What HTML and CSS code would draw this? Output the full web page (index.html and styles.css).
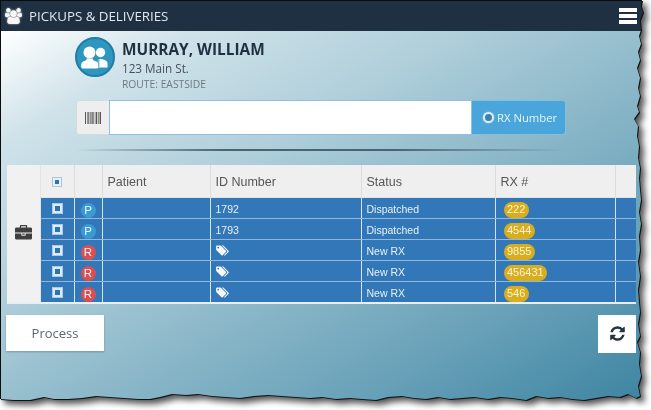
FILE: index.html
```html
<!DOCTYPE html>
<html lang="en">
<head>
<meta charset="utf-8">
<title>Pickups &amp; Deliveries</title>
<link rel="stylesheet" href="styles.css">
</head>
<body>
<div class="shadow">
<div class="app">
  <header class="nav">
    <svg class="nav-icon" viewBox="0 0 1920 1792"><path d="M593 896q-162 5-265 128h-134q-82 0-138-40.500t-56-118.500q0-353 124-353 6 0 43.500 21t97.500 42.500 119 21.500q67 0 133-23-5 37-5 66 0 139 81 256zm1071 637q0 120-73 189.500t-194 69.500h-874q-121 0-194-69.500t-73-189.500q0-53 3.500-103.500t14-109 26.500-108.500 43-97.500 62-81 85.500-53.500 111.500-20q10 0 43 21.500t73 48 107 48 135 21.500 135-21.500 107-48 73-48 43-21.500q61 0 111.500 20t85.500 53.500 62 81 43 97.500 26.500 108.500 14 109 3.500 103.500zm-1024-1277q0 106-75 181t-181 75-181-75-75-181 75-181 181-75 181 75 75 181zm704 384q0 159-112.500 271.500t-271.500 112.500-271.500-112.500-112.500-271.500 112.500-271.500 271.500-112.500 271.500 112.500 112.500 271.500zm576 225q0 78-56 118.500t-138 40.500h-134q-103-123-265-128 81-117 81-256 0-29-5-66 66 23 133 23 59 0 119-21.500t97.500-42.500 43.500-21q124 0 124 353zm-128-609q0 106-75 181t-181 75-181-75-75-181 75-181 181-75 181 75 75 181z"/></svg>
    <span class="nav-title">PICKUPS &amp; DELIVERIES</span>
    <div class="burger"><i></i><i></i><i></i></div>
  </header>
  <main class="main">
    <section class="patient">
      <svg class="avatar" viewBox="0 0 40 40">
        <circle cx="20" cy="20" r="19" fill="#2f97bd" stroke="#1d7ea8" stroke-width="2"/>
        <circle cx="25.500" cy="15.500" r="4.700" fill="#fff"/>
        <path d="M23 22h3.500c3 .8 6 1.800 6 4.500v4h-10z" fill="#fff"/>
        <circle cx="14.500" cy="15.500" r="6" fill="#fff"/>
        <path d="M11.500 21.500c.4 1.600-.6 2-2 2.400-1.900.6-3.300 1.500-3.300 3.600v2.500c0 1 .8 1.500 1.800 1.500h13.500c1 0 1.800-.5 1.800-1.500v-2.500c0-2.100-1.400-3-3.300-3.600-1.400-.4-2.400-.8-2-2.400z" fill="#fff"/>
        <path d="M23.800 21.500v8.500" stroke="#2f97bd" stroke-width="1" fill="none"/>
      </svg>
      <div class="patient-info">
        <h1 class="patient-name">MURRAY, WILLIAM</h1>
        <div class="patient-addr">123 Main St.</div>
        <div class="patient-route">ROUTE: EASTSIDE</div>
      </div>
    </section>

    <div class="input-group">
      <span class="addon">
        <svg class="barcode" viewBox="0 0 16 12"><path d="M0 0h1v12H0zM2 0h.6v12H2zM3.300 0h1v12h-1zM5 0h.6v12H5zM6.500 0h1.200v12H6.500zM8.400 0h.6v12h-.6zM9.800 0h.6v12h-.6zM11 0h1.200v12H11zM13 0h.6v12H13zM14.600 0H16v12h-1.400z"/></svg>
      </span>
      <input class="rx-input" type="text" aria-label="RX Number">
      <button class="rx-btn" type="button"><span class="radio"></span>RX Number</button>
    </div>
    <div class="divider"></div>

    <table class="grid">
      <colgroup>
        <col class="c-side"><col class="c-check"><col class="c-type"><col class="c-patient"><col class="c-id"><col class="c-status"><col class="c-rx"><col>
      </colgroup>
      <tbody>
        <tr>
          <td class="side" rowspan="6">
            <svg class="case" viewBox="0 0 1792 1792"><path d="M640 256h512v-128h-512v128zm1152 640v480q0 66-47 113t-113 47h-1472q-66 0-113-47t-47-113v-480h672v160q0 26 19 45t45 19h320q26 0 45-19t19-45v-160h672zm-768 0v128h-256v-128h256zm768-480v384h-1792v-384q0-66 47-113t113-47h352v-160q0-40 28-68t68-28h576q40 0 68 28t28 68v160h352q66 0 113 47t47 113z"/></svg>
          </td>
          <th class="center"><span class="check check-head"></span></th>
          <th></th>
          <th>Patient</th>
          <th>ID Number</th>
          <th>Status</th>
          <th>RX #</th>
          <th></th>
        </tr>
        <tr class="row">
          <td><div class="cell cell-check"><span class="check"></span></div></td>
          <td><div class="cell cell-dot"><span class="dot dot-p">P</span></div></td>
          <td></td>
          <td><div class="cell cell-text">1792</div></td>
          <td><div class="cell cell-text">Dispatched</div></td>
          <td><div class="cell cell-pill"><span class="pill">222</span></div></td>
          <td></td>
        </tr>
        <tr class="row">
          <td><div class="cell cell-check"><span class="check"></span></div></td>
          <td><div class="cell cell-dot"><span class="dot dot-p">P</span></div></td>
          <td></td>
          <td><div class="cell cell-text">1793</div></td>
          <td><div class="cell cell-text">Dispatched</div></td>
          <td><div class="cell cell-pill"><span class="pill">4544</span></div></td>
          <td></td>
        </tr>
        <tr class="row">
          <td><div class="cell cell-check"><span class="check"></span></div></td>
          <td><div class="cell cell-dot"><span class="dot dot-r">R</span></div></td>
          <td></td>
          <td><div class="cell cell-text"><svg class="tag" viewBox="0 0 1920 1792"><path d="M448 384q0-53-37.500-90.500t-90.500-37.500-90.500 37.500-37.500 90.500 37.500 90.500 90.500 37.500 90.500-37.500 37.500-90.500zm1067 576q0 53-37 90l-491 492q-39 37-91 37-53 0-90-37l-715-716q-38-37-64.500-101t-26.500-117v-416q0-52 38-90t90-38h416q53 0 117 26.500t102 64.500l715 714q37 39 37 91zm384 0q0 53-37 90l-491 492q-39 37-91 37-36 0-59-14t-53-45l470-470q37-37 37-90 0-52-37-91l-715-714q-38-38-102-64.500t-117-26.500h224q53 0 117 26.500t102 64.500l715 714q37 39 37 91z"/></svg></div></td>
          <td><div class="cell cell-text">New RX</div></td>
          <td><div class="cell cell-pill"><span class="pill">9855</span></div></td>
          <td></td>
        </tr>
        <tr class="row">
          <td><div class="cell cell-check"><span class="check"></span></div></td>
          <td><div class="cell cell-dot"><span class="dot dot-r">R</span></div></td>
          <td></td>
          <td><div class="cell cell-text"><svg class="tag" viewBox="0 0 1920 1792"><path d="M448 384q0-53-37.500-90.500t-90.500-37.500-90.500 37.500-37.500 90.500 37.500 90.500 90.500 37.500 90.500-37.500 37.500-90.500zm1067 576q0 53-37 90l-491 492q-39 37-91 37-53 0-90-37l-715-716q-38-37-64.500-101t-26.500-117v-416q0-52 38-90t90-38h416q53 0 117 26.500t102 64.500l715 714q37 39 37 91zm384 0q0 53-37 90l-491 492q-39 37-91 37-36 0-59-14t-53-45l470-470q37-37 37-90 0-52-37-91l-715-714q-38-38-102-64.500t-117-26.500h224q53 0 117 26.500t102 64.500l715 714q37 39 37 91z"/></svg></div></td>
          <td><div class="cell cell-text">New RX</div></td>
          <td><div class="cell cell-pill"><span class="pill">456431</span></div></td>
          <td></td>
        </tr>
        <tr class="row">
          <td><div class="cell cell-check"><span class="check"></span></div></td>
          <td><div class="cell cell-dot"><span class="dot dot-r">R</span></div></td>
          <td></td>
          <td><div class="cell cell-text"><svg class="tag" viewBox="0 0 1920 1792"><path d="M448 384q0-53-37.500-90.500t-90.500-37.500-90.500 37.500-37.500 90.500 37.500 90.500 90.500 37.500 90.500-37.500 37.500-90.500zm1067 576q0 53-37 90l-491 492q-39 37-91 37-53 0-90-37l-715-716q-38-37-64.500-101t-26.500-117v-416q0-52 38-90t90-38h416q53 0 117 26.500t102 64.500l715 714q37 39 37 91zm384 0q0 53-37 90l-491 492q-39 37-91 37-36 0-59-14t-53-45l470-470q37-37 37-90 0-52-37-91l-715-714q-38-38-102-64.500t-117-26.500h224q53 0 117 26.500t102 64.500l715 714q37 39 37 91z"/></svg></div></td>
          <td><div class="cell cell-text">New RX</div></td>
          <td><div class="cell cell-pill"><span class="pill">546</span></div></td>
          <td></td>
        </tr>
      </tbody>
    </table>

    <div class="actions">
      <button class="process" type="button">Process</button>
      <button class="refresh" type="button" aria-label="Refresh">
        <svg viewBox="0 0 1792 1792"><path d="M1639 1056q0 5-1 7-64 268-268 434.500t-478 166.500q-146 0-282.500-55t-243.500-157l-129 129q-19 19-45 19t-45-19-19-45v-448q0-26 19-45t45-19h448q26 0 45 19t19 45-19 45l-137 137q71 66 161 102t187 36q134 0 250-65t186-179q11-17 53-117 8-23 30-23h192q13 0 22.500 9.500t9.500 22.500zm25-800v448q0 26-19 45t-45 19h-448q-26 0-45-19t-19-45 19-45l138-138q-148-137-349-137-134 0-250 65t-186 179q-11 17-53 117-8 23-30 23h-199q-13 0-22.500-9.500t-9.500-22.500v-7q65-268 270-434.500t480-166.500q146 0 284 55.500t245 156.500l130-129q19-19 45-19t45 19 19 45z"/></svg>
      </button>
    </div>
  </main>
</div>
</div>
</body>
</html>
```
FILE: styles.css
```css
* { box-sizing: border-box; }
html, body { margin: 0; padding: 0; background: #fff; overflow: hidden; }
body { width: 651px; height: 410px; }

.shadow {
  width: 651px;
  height: 410px;
  filter: drop-shadow(1px 1px 0 #111) drop-shadow(4px 4px 3px rgba(40,40,40,.8));
}
.app {
  width: 651px;
  height: 410px;
  display: flex;
  flex-direction: column;
  border-top: 1px solid #0c0c0c;
  border-left: 1px solid #0c0c0c;
  clip-path: polygon(0 0, 642px 0, 641px 6px, 643px 12px, 640px 20px, 641px 30px, 639px 36px, 641px 44px, 638px 52px, 640px 60px, 637px 68px, 640px 78px, 638px 88px, 640px 96px, 637px 106px, 639px 112px, 634px 119px, 638px 126px, 637px 136px, 639px 146px, 638px 158px, 640px 168px, 639px 178px, 640px 190px, 641px 200px, 639px 212px, 641px 224px, 639px 236px, 640px 250px, 638px 262px, 640px 276px, 638px 290px, 639px 302px, 640px 312px, 638px 324px, 640px 336px, 637px 342px, 640px 352px, 639px 364px, 641px 376px, 638px 386px, 640px 396px, 636px 398px, 628px 394px, 620px 397px, 608px 396px, 596px 398px, 584px 400px, 572px 399px, 560px 397px, 548px 398px, 536px 396px, 526px 400px, 512px 398px, 500px 397px, 488px 399px, 474px 397px, 462px 398px, 450px 399px, 438px 397px, 426px 399px, 414px 398px, 402px 396px, 388px 397px, 376px 400px, 362px 399px, 350px 398px, 336px 399px, 322px 397px, 310px 398px, 296px 397px, 282px 396px, 268px 395px, 254px 396px, 240px 398px, 226px 397px, 212px 396px, 198px 394px, 186px 395px, 172px 394px, 160px 397px, 150px 399px, 138px 399px, 124px 398px, 110px 397px, 96px 396px, 82px 398px, 68px 399px, 54px 399px, 44px 397px, 30px 400px, 14px 400px, 0 399px);
}

/* top bar */
.nav {
  flex: none;
  height: 30px;
  background: #1f3042;
  display: flex;
  align-items: center;
  padding: 0 14px 0 4px;
  color: #dfe7ec;
  font: 13.300px "Open Sans", sans-serif;
}
.nav-icon { width: 17px; height: 16px; fill: #f4f6f7; margin-right: 7px; filter: drop-shadow(0 0 1px rgba(255,255,255,.6)); }
.nav-title { flex: 1; }
.burger { width: 18px; display: flex; flex-direction: column; gap: 2px; }
.burger i { display: block; height: 4px; background: #fff; }

/* content */
.main {
  flex: 1;
  padding: 6px 15px 0 5px;
  background: linear-gradient(to bottom right, #ffffff 0%, #cfe2e9 15%, #b0cfdb 35%, #8cb8c9 55%, #6aa2b9 75%, #3a82a0 100%);
}
.patient {
  display: flex;
  gap: 7px;
  margin-left: 69px;
  height: 63px;
}
.avatar { width: 40px; height: 40px; flex: none; }
.patient-info { color: #55626d; font-family: "Open Sans", sans-serif; }
.patient-name {
  margin: 2px 0 0;
  font-size: 15.400px;
  line-height: 22px;
  font-weight: 700;
  color: #1f3042;
}
.patient-addr { font-size: 11.700px; line-height: 15px; color: #44525e; }
.patient-route { font-size: 10.300px; line-height: 17px; color: #6d7a84; }

.input-group {
  display: flex;
  height: 35px;
  margin-left: 70px;
  width: 490px;
}
.addon {
  width: 33px;
  display: flex;
  align-items: center;
  justify-content: center;
  background: #eeeeee;
  border: 1px solid #cfdde3;
  border-right: 0;
  border-radius: 4px 0 0 4px;
}
.barcode { width: 16px; height: 12px; fill: #555; }
.rx-input {
  flex: 1;
  min-width: 0;
  background: #fff;
  border: 1px solid #8fc0e4;
  outline: 0;
  padding: 0;
}
.rx-btn {
  width: 94px;
  display: flex;
  align-items: center;
  padding: 0 0 0 11px;
  background: #4aa6da;
  border: 1px solid #7fc0e2;
  border-left: 0;
  border-radius: 0 4px 4px 0;
  color: #e6f3fa;
  font: 11.300px "Open Sans", sans-serif;
}
.radio {
  width: 11px;
  height: 11px;
  margin-right: 3px;
  border-radius: 50%;
  background: #3f7fac;
  border: 2.500px solid #d9edf7;
  box-shadow: 0 0 0 .5px #8ac4e4;
}
.divider {
  height: 2px;
  margin: 14px 0 14px 70px;
  width: 490px;
  background: linear-gradient(90deg, rgba(50,70,85,0), #4b6473 30%, #4b6473 65%, rgba(50,70,85,0));
}

/* table */
.grid {
  width: 629px;
  margin-left: 1px;
  border-collapse: collapse;
  table-layout: fixed;
  background: #f0f0f0;
  font-family: "Liberation Sans", Arial, sans-serif;
  border-bottom: 2px solid #e8eef1;
}
.c-side { width: 33px; }
.c-check { width: 34px; }
.c-type { width: 28px; }
.c-patient { width: 108px; }
.c-id { width: 151px; }
.c-status { width: 134px; }
.c-rx { width: 120px; }
.grid th {
  height: 32px;
  padding: 2px 0 0 5px;
  text-align: left;
  font-size: 12.500px;
  font-weight: 400;
  color: #555;
  background: #efefef;
  border-left: 1px solid #dcdcdc;
  border-bottom: 1px solid #e4e4e4;
}
.grid th.center { padding: 0; text-align: center; }
.grid .row td {
  height: 21px;
  padding: 0;
  background: #3278b8;
  color: #e8f0f7;
  font-size: 10.500px;
  line-height: 12px;
  border-left: 1px solid #d6e4f0;
  border-bottom: 1px solid #8fb8da;
}
.cell {
  height: 20px;
  display: flex;
  align-items: center;
}
.cell-text { padding: 3px 0 0 5px; }
.cell-check { justify-content: center; padding-top: 1px; }
.cell-dot { justify-content: center; padding-top: 5px; }
.cell-pill { padding: 5px 0 0 8px; }
.grid .side {
  background: #f1f1f1;
  text-align: center;
  padding: 0;
  border-right: 1px solid #e4e4e4;
}
.case { width: 17px; height: 17px; fill: #3f3f3f; vertical-align: middle; }
.check {
  display: block;
  width: 11px;
  height: 11px;
  background: #2f72b0;
  border: 1px solid #a9cbe8;
  box-shadow: inset 0 0 0 2px #dcebf7;
}
.check-head {
  display: inline-block;
  width: 10px;
  height: 10px;
  vertical-align: -2px;
  background: #2f72b0;
  border: 1px solid #a3c7e6;
  box-shadow: inset 0 0 0 2px #e8f1f9;
}
.dot {
  flex: none;
  width: 15px;
  height: 15px;
  border-radius: 50%;
  font-size: 11.500px;
  line-height: 15px;
  text-align: center;
  color: #eef5fa;
}
.dot-p { background: #3a9ad4; }
.dot-r { background: #dc4e50; }
.pill {
  flex: none;
  padding: 0 3.500px;
  height: 16px;
  border-radius: 8px;
  background: #d8ae1e;
  color: #f8f3d8;
  font-size: 11px;
  line-height: 15px;
}
.tag { width: 13px; height: 12px; fill: #f4f8fb; }

/* actions */
.actions {
  display: flex;
  justify-content: space-between;
  align-items: flex-start;
  margin-top: 11px;
}
.process {
  width: 98px;
  height: 36px;
  background: #fff;
  border: 0;
  box-shadow: 0 1px 2px rgba(40,70,90,.35);
  color: #5a6670;
  font: 13px "Open Sans", sans-serif;
}
.refresh {
  width: 38px;
  height: 38px;
  background: #fff;
  border: 0;
  padding: 0;
  display: flex;
  align-items: center;
  justify-content: center;
}
.refresh svg { width: 17px; height: 17px; fill: #24333f; }
```
